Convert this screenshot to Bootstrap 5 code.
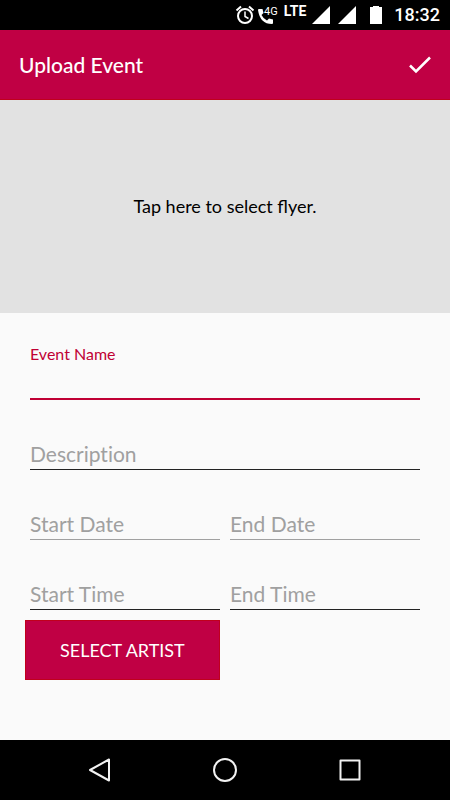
<!DOCTYPE html>
<html lang="en">
<head>
<meta charset="utf-8">
<meta name="viewport" content="width=device-width, initial-scale=1">
<title>Upload Event</title>
<link href="https://cdn.jsdelivr.net/npm/bootstrap@5.3.0/dist/css/bootstrap.min.css" rel="stylesheet">
<style>
  :root { --brand: #c00044; }
  body { font-family: Lato, "Open Sans", sans-serif; background: #fafafa; font-weight: 500; }
  .status-bar { height: 30px; background: #000; color: #fff; padding-right: 10px; }
  .status-bar svg { flex: none; fill: #fff; }
  .status-bar .battery { margin-left: 14px; }
  .net-label { font: 700 14px/14px Roboto, sans-serif; margin: 0 6px 8px 5px; }
  .clock { font: 500 18px/30px Roboto, sans-serif; margin-left: 12px; }
  .app-bar { height: 70px; background: var(--brand); border-bottom: 1px solid #c0001c; color: #fff; padding: 0 18px 0 19px; }
  .app-title { font-size: 21px; line-height: 30px; font-weight: 500; }
  .flyer { height: 213px; background: #e2e2e2; color: #000; font-size: 18px; font-weight: 400; }
  .flyer:hover { background: #dcdcdc; }
  .event-form { padding: 30px 30px 0; }
  .float-label { font-size: 16px; line-height: 22px; font-weight: 400; color: #c00034; }
  .line-input { height: 40px; padding: 8px 0 0; border: 0; border-bottom: 1px solid #222; border-radius: 0;
    background: transparent; font-size: 21px; font-weight: 400; line-height: 30px; font-variant-ligatures: none; }
  .line-input:focus { background: transparent; box-shadow: none; border-color: var(--brand); }
  .line-input::placeholder { color: #a0a0a0; opacity: 1; }
  .line-active { height: 35px; border-bottom: 2px solid #c00034; }
  .line-soft { border-bottom-color: #a0a0a0; }
  .field-stack { gap: 30px; }
  .field-pair { gap: 10px; }
  .action-row { padding: 10px 25px; }
  .btn-brand { --bs-btn-color: #fff; --bs-btn-bg: var(--brand); --bs-btn-hover-color: #fff; --bs-btn-hover-bg: #a8003b;
    --bs-btn-active-bg: #a8003b; --bs-btn-active-color: #fff; padding: 15px 34px; border: 1px solid #c0001c; font-size: 18px; line-height: 28px; font-weight: 400; }
  .nav-keys { height: 60px; background: #000; padding: 0 37px; }
  .nav-keys .btn { width: 126px; }
  .nav-keys svg { fill: none; stroke: #f2f2f2; stroke-width: 2; stroke-linejoin: round; }
</style>
</head>
<body class="d-flex flex-column min-vh-100">
  <div class="status-bar d-flex align-items-center justify-content-end">
    <svg width="20" height="22" viewBox="0 0 20 22" aria-hidden="true">
      <g fill="none" stroke="#fff" stroke-width="2"><circle cx="10" cy="12" r="7"/><path d="M1.500 6.500 6 2.500M18.500 6.500 14 2.500"/><path d="M10 7.500v5l3.500 2" stroke-width="1.500"/></g>
    </svg>
    <svg width="24" height="22" viewBox="0 0 24 22" aria-hidden="true">
      <path d="M4 5h3.500l1 4-2 2q2 4 5.500 5.500l2-2 4 1V19q0 1-1 1Q5 20 3 6q0-1 1-1z"/>
      <text x="9" y="11" font-family="Roboto, sans-serif" font-size="11" font-weight="400">4G</text>
    </svg>
    <span class="net-label">LTE</span>
    <svg width="18" height="18" viewBox="0 0 18 18" aria-hidden="true"><path d="M0 18 18 0v18z"/></svg>
    <svg class="ms-2" width="18" height="18" viewBox="0 0 18 18" aria-hidden="true"><path d="M0 18 18 0v18z"/></svg>
    <svg class="battery" width="12" height="18" viewBox="0 0 12 18" aria-hidden="true"><path d="M3 0h6v1h3v17H0V1h3z"/></svg>
    <span class="clock">18:32</span>
  </div>

  <header class="app-bar d-flex align-items-center justify-content-between">
    <h1 class="app-title m-0">Upload Event</h1>
    <button type="submit" form="event-form" class="btn p-0 border-0 d-flex" aria-label="Save event">
      <svg width="24" height="20" viewBox="0 0 24 20" fill="none" stroke="#fff" stroke-width="2.500" aria-hidden="true"><path d="M2 10.500 8 16.500 22 2.500"/></svg>
    </button>
  </header>

  <main class="flex-grow-1">
    <button type="button" class="flyer btn w-100 rounded-0 border-0">Tap here to select flyer.</button>
    <form id="event-form">
      <div class="event-form field-stack d-flex flex-column">
        <div>
          <label for="name" class="float-label d-block">Event Name</label>
          <input id="name" type="text" class="form-control line-input line-active">
        </div>
        <input type="text" class="form-control line-input" placeholder="Description" aria-label="Description">
        <div class="field-pair d-flex">
          <input type="text" class="form-control line-input line-soft" placeholder="Start Date" aria-label="Start Date">
          <input type="text" class="form-control line-input line-soft" placeholder="End Date" aria-label="End Date">
        </div>
        <div class="field-pair d-flex">
          <input type="text" class="form-control line-input" placeholder="Start Time" aria-label="Start Time">
          <input type="text" class="form-control line-input" placeholder="End Time" aria-label="End Time">
        </div>
      </div>
      <div class="action-row">
        <button type="button" class="btn btn-brand rounded-0">SELECT ARTIST</button>
      </div>
    </form>
  </main>

  <nav class="nav-keys d-flex align-items-center justify-content-between" aria-label="System">
    <button type="button" class="btn p-0 border-0 d-flex justify-content-center" aria-label="Back">
      <svg width="24" height="24" viewBox="0 0 24 24"><path d="M21 1.500v21L2 12z"/></svg>
    </button>
    <button type="button" class="btn p-0 border-0 d-flex justify-content-center" aria-label="Home">
      <svg width="24" height="24" viewBox="0 0 24 24"><circle cx="12" cy="12" r="11"/></svg>
    </button>
    <button type="button" class="btn p-0 border-0 d-flex justify-content-center" aria-label="Recent apps">
      <svg width="24" height="24" viewBox="0 0 24 24"><path d="M2.500 2.500h19v19h-19z"/></svg>
    </button>
  </nav>
<script src="https://cdn.jsdelivr.net/npm/bootstrap@5.3.0/dist/js/bootstrap.bundle.min.js"></script>
</body>
</html>
